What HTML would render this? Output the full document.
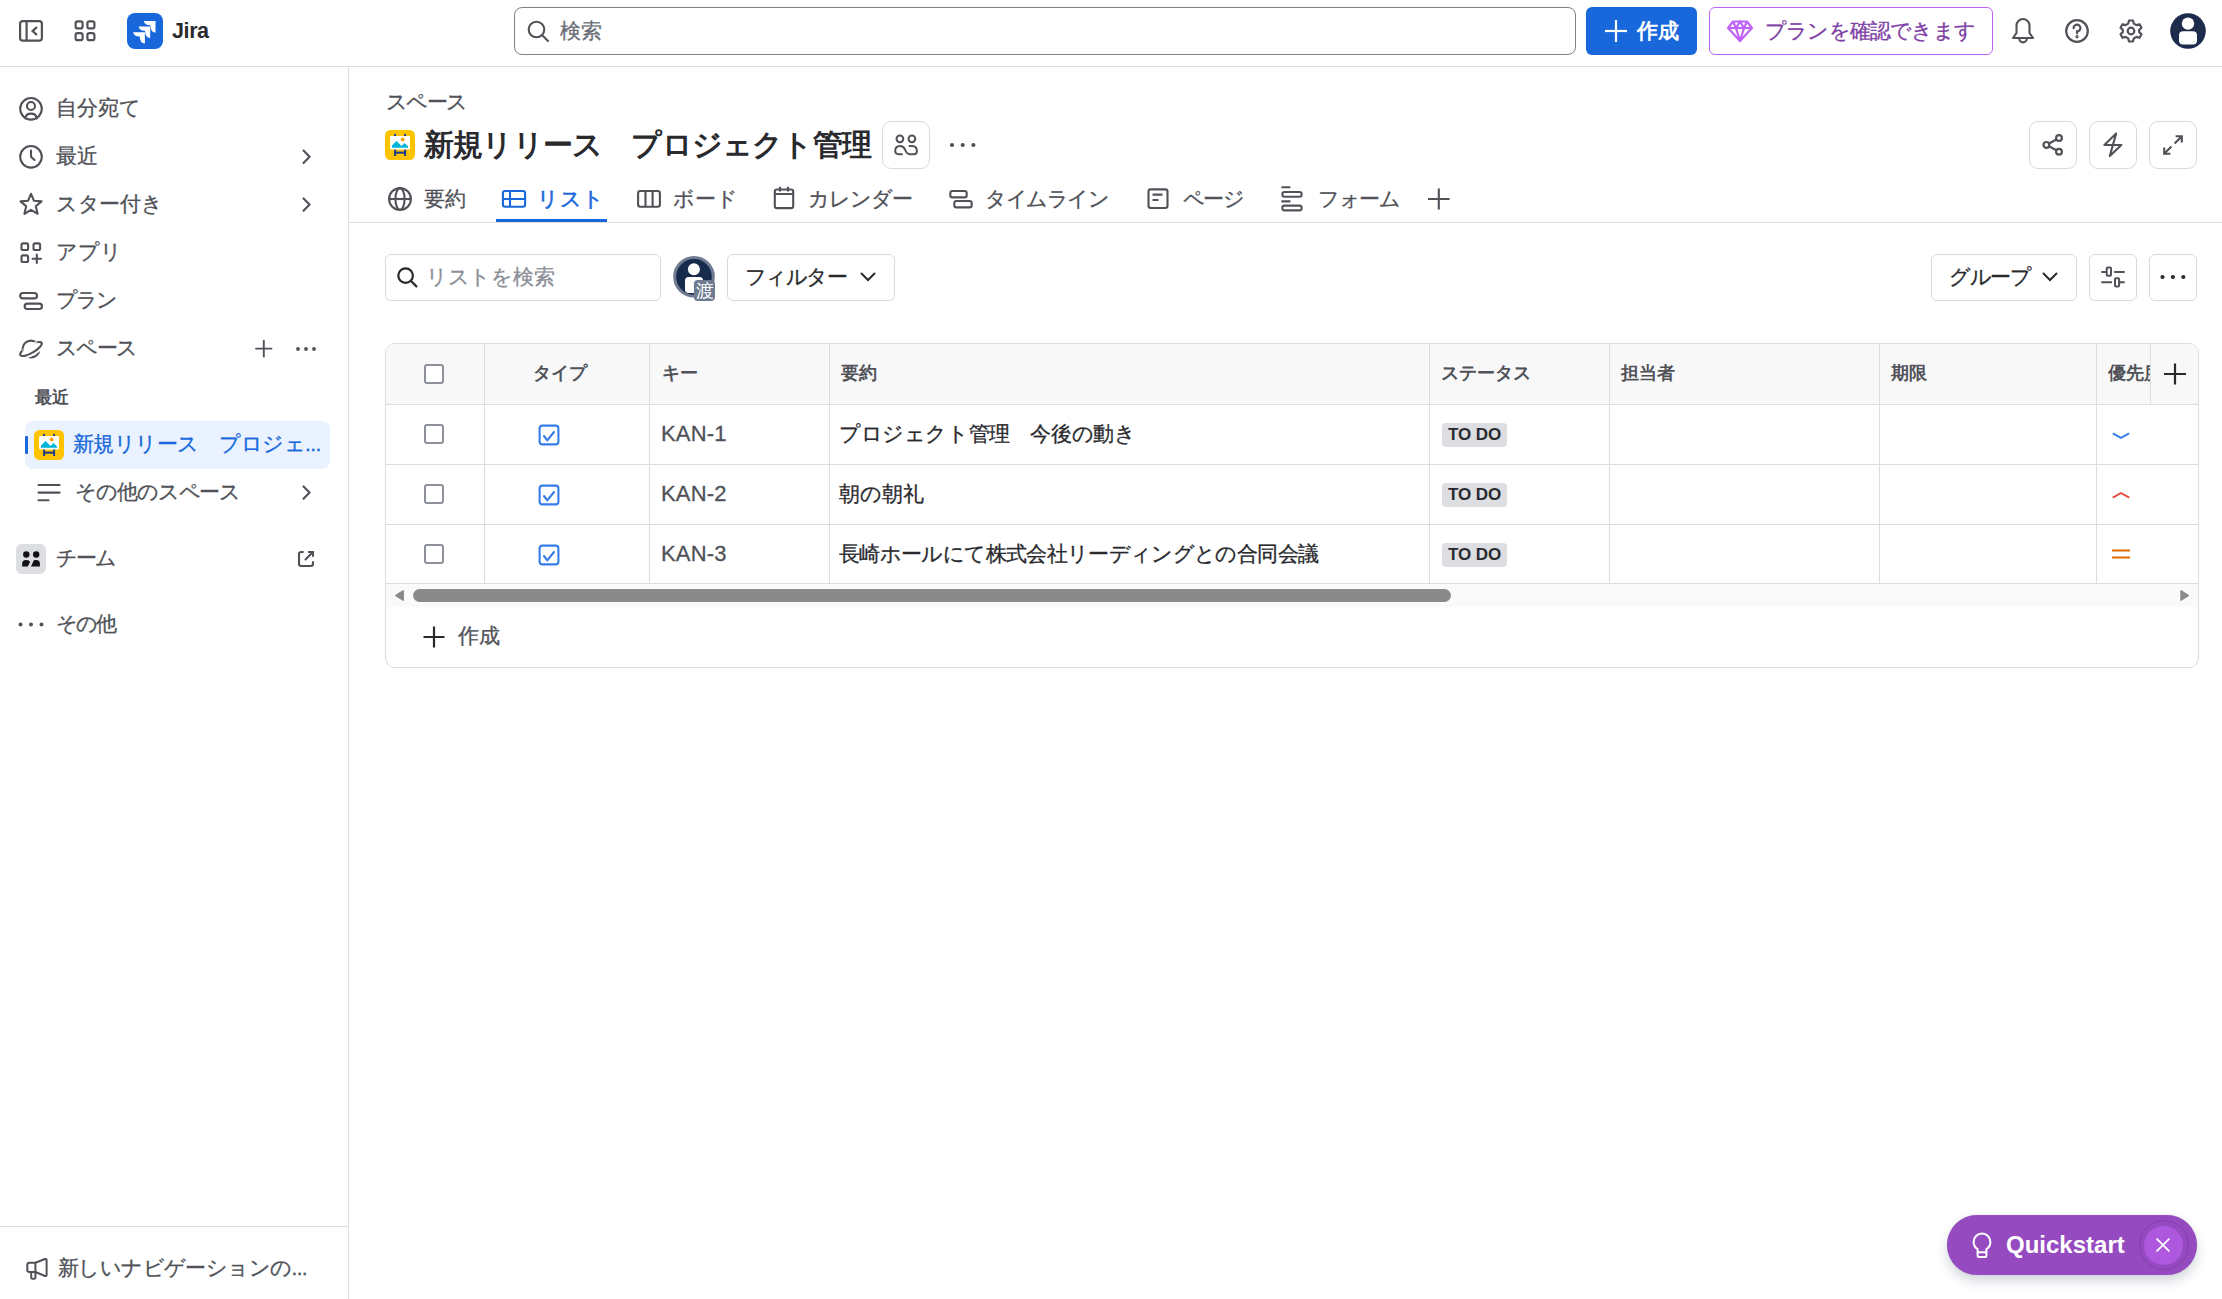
<!DOCTYPE html>
<html lang="ja">
<head>
<meta charset="utf-8">
<style>
*{box-sizing:border-box;margin:0;padding:0}
html,body{width:2222px;height:1299px;overflow:hidden;background:#fff}
body{font-family:"Liberation Sans",sans-serif;color:#292a2e;font-size:21px;position:relative;-webkit-text-stroke:0.3px currentColor}
.a{position:absolute}
svg{display:block}
.ic{position:absolute}
/* top bar */
#top{left:0;top:0;width:2222px;height:67px;border-bottom:1px solid #dcdddc}
#side{left:0;top:67px;width:349px;height:1232px;border-right:1px solid #dcdddc}
.nav{position:absolute;left:56px;color:#505258;font-size:21px;line-height:24px;white-space:nowrap}
.btn{position:absolute;border:1px solid #d9dad9;border-radius:9px;background:#fff}
.th{position:absolute;top:361px;font-weight:bold;-webkit-text-stroke:0;color:#505258;font-size:18px;line-height:24px;white-space:nowrap}
.vl{position:absolute;width:1px;background:#dcdddc}
.hl{position:absolute;height:1px;background:#dcdddc}
.cb{position:absolute;width:20px;height:20px;border:2px solid #8c919b;border-radius:3px;background:#fff}
.td{position:absolute;font-size:21px;line-height:24px;white-space:nowrap;color:#292a2e}
.tab{position:absolute;top:187px;font-size:21px;line-height:24px;color:#505258;white-space:nowrap}
.loz{position:absolute;left:1442px;width:65px;height:24px;background:#dddee1;border-radius:4px;font-weight:bold;-webkit-text-stroke:0;font-size:17px;line-height:24px;text-align:center;color:#292a2e;letter-spacing:-0.1px}
</style>
</head>
<body>
<!-- TOP BAR -->
<div id="top" class="a"></div>
<!-- sidebar toggle -->
<svg class="ic" style="left:17px;top:18px" width="28" height="26" viewBox="0 0 28 26" fill="none" stroke="#505258" stroke-width="2.2">
<rect x="3.1" y="3.1" width="21.8" height="19.6" rx="2.6"/><line x1="9.6" y1="3" x2="9.6" y2="23"/><path d="M19.3 9.6 L15.6 13 L19.3 16.4" stroke-linecap="round"/></svg>
<!-- apps -->
<svg class="ic" style="left:72px;top:18px" width="26" height="26" viewBox="0 0 26 26" fill="none" stroke="#505258" stroke-width="2.2">
<rect x="3.6" y="3.4" width="7" height="7" rx="2"/><rect x="15.4" y="3.4" width="7" height="7" rx="2"/><rect x="3.6" y="15.2" width="7" height="7" rx="2"/><rect x="15.4" y="15.2" width="7" height="7" rx="2"/></svg>
<!-- jira logo -->
<svg class="ic" style="left:127px;top:13px" width="36" height="36" viewBox="0 0 36 36">
<rect width="36" height="36" rx="8" fill="#1868db"/>
<g fill="#fff">
<path d="M16.8 8.1 L28.5 8.1 L28.5 19.7 Q23.4 19.2 23.4 12.3 Q17.5 12.3 16.8 8.1 Z"/>
<path d="M11.6 13.5 L23.2 13.5 L23.2 25 Q18.1 24.6 18.1 17.7 Q12.2 17.7 11.6 13.5 Z"/>
<path d="M6.1 19.2 L17.9 19.2 L17.9 30.4 Q12.8 30 12.8 23.4 Q6.8 23.4 6.1 19.2 Z"/>
</g></svg>
<div class="a" style="left:172px;top:18px;font-size:21.5px;line-height:26px;font-weight:bold;-webkit-text-stroke:0;color:#292a2e;letter-spacing:-0.4px">Jira</div>
<!-- search -->
<div class="a" style="left:514px;top:7px;width:1062px;height:48px;border:1px solid #7d818a;border-radius:8px"></div>
<svg class="ic" style="left:525px;top:18px" width="26" height="26" viewBox="0 0 26 26" fill="none" stroke="#505258" stroke-width="2.1" stroke-linecap="round">
<circle cx="11.5" cy="11.5" r="7.8"/><line x1="17.3" y1="17.3" x2="23" y2="23"/></svg>
<div class="a" style="left:560px;top:19px;font-size:21px;line-height:24px;color:#6b6e76">検索</div>
<!-- create -->
<div class="a" style="left:1586px;top:7px;width:111px;height:48px;background:#1868db;border-radius:6px"></div>
<svg class="ic" style="left:1604px;top:19px" width="24" height="24" viewBox="0 0 24 24" stroke="#fff" stroke-width="2.2"><line x1="1" y1="12" x2="23" y2="12"/><line x1="12" y1="1" x2="12" y2="23"/></svg>
<div class="a" style="left:1637px;top:19px;font-size:21px;line-height:24px;font-weight:bold;-webkit-text-stroke:0;color:#fff">作成</div>
<!-- plan -->
<div class="a" style="left:1709px;top:7px;width:284px;height:48px;border:1.5px solid #bf63f3;border-radius:6px"></div>
<svg class="ic" style="left:1726px;top:19px" width="28" height="24" viewBox="0 0 28 24" fill="none" stroke="#bf63f3" stroke-width="2.2" stroke-linejoin="round">
<path d="M7 2.5 H21 L26 9 L14 22 L2 9 Z"/><path d="M2 9 H26"/><path d="M10 9 L14 22 L18 9"/><path d="M7 2.5 L10 9 L14 2.5 L18 9 L21 2.5"/></svg>
<div class="a" style="left:1765px;top:19px;font-size:21px;line-height:24px;color:#803fa5;letter-spacing:-0.8px">プランを確認できます</div>
<!-- bell -->
<svg class="ic" style="left:2009px;top:17px" width="28" height="28" viewBox="0 0 28 28" fill="none" stroke="#505258" stroke-width="2.1" stroke-linejoin="round">
<path d="M4 21 L7.5 16 V8.5 A6.5 6.5 0 0 1 20.5 8.5 V16 L24 21 Z"/><path d="M10.2 21.6 A3.8 3.8 0 0 0 17.8 21.6"/></svg>
<!-- help -->
<svg class="ic" style="left:2063px;top:17px" width="28" height="28" viewBox="0 0 28 28" fill="none" stroke="#505258" stroke-width="2.2">
<circle cx="14" cy="14" r="10.8"/><path d="M10.6 11.2 A3.4 3.4 0 1 1 14 14.4 V16.3" stroke-linecap="round"/><circle cx="14" cy="19.8" r="0.6" fill="#505258"/></svg>
<!-- settings -->
<svg class="ic" style="left:2117px;top:17px" width="28" height="28" viewBox="0 0 28 28" fill="none" stroke="#505258" stroke-width="2.2" stroke-linejoin="round">
<path d="M12 3.5 H16 L16.8 6.6 L19.4 8.1 L22.5 7.2 L24.5 10.7 L22.2 12.9 V15.1 L24.5 17.3 L22.5 20.8 L19.4 19.9 L16.8 21.4 L16 24.5 H12 L11.2 21.4 L8.6 19.9 L5.5 20.8 L3.5 17.3 L5.8 15.1 V12.9 L3.5 10.7 L5.5 7.2 L8.6 8.1 L11.2 6.6 Z"/><circle cx="14" cy="14" r="3.3"/></svg>
<!-- avatar -->
<svg class="ic" style="left:2169px;top:12px" width="38" height="38" viewBox="0 0 38 38">
<defs><clipPath id="cav"><circle cx="19" cy="19" r="17.8"/></clipPath></defs>
<circle cx="19" cy="19" r="17.8" fill="#1d2b4c"/>
<g clip-path="url(#cav)" fill="#fff"><circle cx="19" cy="11.6" r="6.2"/><rect x="10" y="19.2" width="18" height="13.4" rx="4"/></g></svg>


<!-- SIDEBAR -->
<div id="side" class="a"></div>
<!-- sidebar icons -->
<svg class="ic" style="left:0;top:67px" width="349" height="600" viewBox="0 67 349 600" fill="none" stroke="#505258" stroke-width="2.1" stroke-linecap="round" stroke-linejoin="round">
<!-- person -->
<circle cx="31" cy="108.8" r="10.8"/><circle cx="31" cy="106" r="4"/><path d="M25.3 118.4 Q25.6 113.6 31 113.6 Q36.4 113.6 36.7 118.4"/>
<!-- clock -->
<circle cx="31" cy="156.8" r="10.8"/><path d="M31 150.6 V156.8 L34.5 160"/>
<!-- star -->
<path d="M31 193.8 L34 200.8 L41.5 201.4 L35.8 206.3 L37.6 213.8 L31 209.8 L24.4 213.8 L26.2 206.3 L20.5 201.4 L28 200.8 Z"/>
<!-- apps -->
<rect x="21.5" y="243.4" width="6.6" height="6.6" rx="1.6"/><rect x="33.5" y="243.4" width="6.6" height="6.6" rx="1.6"/><rect x="21.5" y="255.4" width="6.6" height="6.6" rx="1.6"/><path d="M32.6 258.7 H41 M36.8 254.5 V262.9"/>
<!-- plan -->
<rect x="20.2" y="293" width="16.8" height="5.4" rx="2.7"/><rect x="24.6" y="303.6" width="17.4" height="5.4" rx="2.7"/>
<!-- planet -->

<!-- chevrons -->
<path d="M303.5 150.6 L309.6 156.8 L303.5 163"/><path d="M303.5 198.4 L309.6 204.6 L303.5 210.8"/><path d="M303.5 486.4 L309.6 492.6 L303.5 498.8"/>
<!-- plus / more next to space -->
<path d="M256 348.6 H271.5 M263.8 340.8 V356.4" stroke-width="1.9"/>
<!-- other spaces list icon -->
<path d="M38.5 485 H59.6 M38.5 492.6 H59.6 M38.5 500.2 H48.5"/>
<!-- external link -->
<path d="M303.7 552 H301.2 Q299 552 299 554.2 V563.8 Q299 566 301.2 566 H310.8 Q313 566 313 563.8 V561.2" stroke-linecap="butt"/><path d="M305 560.1 L312.4 552.6" stroke-linecap="butt"/><path d="M308 552 H313 V556.7" stroke-linecap="butt" stroke-linejoin="miter"/>
</svg>
<svg class="ic" style="left:0;top:320px" width="62" height="60" viewBox="0 320 62 60" fill="none" stroke="#505258" stroke-width="2.1">
<defs>
<clipPath id="uh"><rect x="-20" y="300" width="102" height="49" transform="rotate(-30 31 349)"/></clipPath>
<clipPath id="lh"><rect x="-20" y="349" width="102" height="49" transform="rotate(-30 31 349)"/></clipPath>
<mask id="ringm" maskUnits="userSpaceOnUse" x="0" y="320" width="62" height="60"><rect x="0" y="320" width="62" height="60" fill="#fff"/><circle cx="31" cy="349" r="8.2" fill="#000" clip-path="url(#uh)"/></mask>
<mask id="planm" maskUnits="userSpaceOnUse" x="0" y="320" width="62" height="60"><rect x="0" y="320" width="62" height="60" fill="#fff"/>
<g transform="rotate(-30 31 349)"><ellipse cx="31" cy="349" rx="12.5" ry="4" fill="#000"/><ellipse cx="31" cy="349" rx="12.5" ry="4" fill="none" stroke="#000" stroke-width="6" clip-path="url(#lh)"/></g></mask>
</defs>
<circle cx="31" cy="349" r="8.4" mask="url(#planm)"/>
<g mask="url(#ringm)"><ellipse cx="31" cy="349" rx="12.3" ry="3.9" transform="rotate(-30 31 349)"/></g>
</svg>
<svg class="ic" style="left:294px;top:344px" width="24" height="10" viewBox="0 0 24 10" fill="#505258"><circle cx="4" cy="5" r="1.9"/><circle cx="12" cy="5" r="1.9"/><circle cx="20" cy="5" r="1.9"/></svg>
<svg class="ic" style="left:17px;top:619px" width="28" height="10" viewBox="0 0 28 10" fill="#505258"><circle cx="3.5" cy="5.4" r="2"/><circle cx="14" cy="5.4" r="2"/><circle cx="24.5" cy="5.4" r="2"/></svg>
<div class="nav" style="top:96px">自分宛て</div>
<div class="nav" style="top:144px">最近</div>
<div class="nav" style="top:192px;letter-spacing:-0.35px">スター付き</div>
<div class="nav" style="top:240px">アプリ</div>
<div class="nav" style="top:288px;letter-spacing:-1.8px">プラン</div>
<div class="nav" style="top:336px;letter-spacing:-1.7px">スペース</div>
<div class="nav" style="left:35px;top:385px;font-size:17.4px;font-weight:bold;-webkit-text-stroke:0">最近</div>
<!-- selected project -->
<div class="a" style="left:25px;top:421px;width:305px;height:48px;background:#e9f2fe;border-radius:8px"></div>
<div class="a" style="left:25px;top:436px;width:3px;height:18px;background:#1868db;border-radius:1px"></div>
<svg class="ic pico" style="left:34px;top:430px" width="30" height="30" viewBox="0 0 30 30">
<rect width="30" height="30" rx="5.5" fill="#ffc400"/>
<g fill="#1f3b87"><rect x="9.1" y="3.9" width="2" height="3"/><rect x="19.1" y="3.9" width="2" height="3"/><rect x="9.1" y="19" width="2" height="7"/><rect x="19.1" y="19" width="2" height="7"/><rect x="10" y="21.6" width="10" height="2.1"/></g>
<rect x="5.1" y="6.1" width="19.9" height="13.5" rx="1" fill="#fff"/>
<path d="M7 15.4 L11.6 11.1 L16.5 15.9 L19.5 13 L23.1 16.6 V17.8 H7 Z" fill="#00b4d8"/>
<circle cx="17.7" cy="9.4" r="1.9" fill="#ff9e00"/>
</svg>
<div class="nav" style="left:73px;top:432px;color:#1868db;letter-spacing:-0.55px">新規リリース　プロジェ...</div>
<div class="nav" style="left:75px;top:480px;letter-spacing:-1.1px">その他のスペース</div>
<!-- team -->
<div class="a" style="left:16px;top:544px;width:30px;height:30px;background:#dddee1;border-radius:6px"></div>
<svg class="ic" style="left:16px;top:544px" width="30" height="30" viewBox="0 0 30 30" fill="#101214">
<circle cx="10.3" cy="10.5" r="3.2"/><circle cx="20.2" cy="10.5" r="3.2"/><path d="M6.2 22.6 V19.6 Q6.2 16 10 16 Q13.9 16 13.9 18.3 L11.7 22.6 Z"/><path d="M15 22.6 L17.5 16.9 Q17.9 16 19 16 H20.3 Q23.9 16 23.9 19.6 V22.6 Z"/></svg>
<div class="nav" style="top:546px;letter-spacing:-1.8px">チーム</div>
<div class="nav" style="top:612px;letter-spacing:-1.8px">その他</div>
<!-- bottom -->
<div class="a" style="left:0;top:1226px;width:348px;height:1px;background:#dcdddc"></div>
<svg class="ic" style="left:24px;top:1255px" width="26" height="28" viewBox="0 0 26 28" fill="none" stroke="#505258" stroke-width="2" stroke-linejoin="round" stroke-linecap="round">
<path d="M11.4 7.8 L21 4 Q22.6 3.5 22.6 5.2 V19.8 Q22.6 21.5 21 21 L11.4 17 H5.3 Q3.3 17 3.3 15 V9.8 Q3.3 7.8 5.3 7.8 Z"/><path d="M11.4 7.8 V22.6 Q11.4 23.8 10.2 23.8 H8.4 Q7.2 23.8 7.2 22.6 V17"/></svg>
<div class="nav" style="left:58px;top:1256px;letter-spacing:-0.6px">新しいナビゲーションの...</div>


<!-- MAIN -->
<div class="a" style="left:386px;top:90px;font-size:21px;line-height:24px;color:#505258;letter-spacing:-1.7px">スペース</div>
<svg class="ic" style="left:385px;top:130px" width="30" height="30" viewBox="0 0 30 30">
<rect width="30" height="30" rx="5.5" fill="#ffc400"/>
<g fill="#1f3b87"><rect x="9.1" y="3.9" width="2" height="3"/><rect x="19.1" y="3.9" width="2" height="3"/><rect x="9.1" y="19" width="2" height="7"/><rect x="19.1" y="19" width="2" height="7"/><rect x="10" y="21.6" width="10" height="2.1"/></g>
<rect x="5.1" y="6.1" width="19.9" height="13.5" rx="1" fill="#fff"/>
<path d="M7 15.4 L11.6 11.1 L16.5 15.9 L19.5 13 L23.1 16.6 V17.8 H7 Z" fill="#00b4d8"/>
<circle cx="17.7" cy="9.4" r="1.9" fill="#ff9e00"/>
</svg>
<div class="a" style="left:424px;top:127px;font-size:30px;line-height:36px;font-weight:bold;-webkit-text-stroke:0;color:#292a2e;white-space:nowrap;letter-spacing:-0.8px">新規リリース　プロジェクト管理</div>
<div class="btn" style="left:882px;top:121px;width:48px;height:48px"></div>
<svg class="ic" style="left:892px;top:131px" width="28" height="28" viewBox="0 0 28 28" fill="none" stroke="#505258" stroke-width="2" stroke-linejoin="round" stroke-linecap="butt">
<circle cx="7.9" cy="7.8" r="3.4"/><circle cx="19.9" cy="7.8" r="3.4"/><path d="M10.7 23.2 H6.5 Q3.2 23.2 3.2 20 Q3.2 15 8 15 Q11.5 15 13 18.5 Q14.8 23.2 17.8 23.2 H21.8 Q24.9 23.2 24.9 20 Q24.9 15 20 15 H16.8"/></svg>
<svg class="ic" style="left:948px;top:140px" width="30" height="10" viewBox="0 0 30 10" fill="#505258"><circle cx="4" cy="5" r="2.1"/><circle cx="14.7" cy="5" r="2.1"/><circle cx="25.4" cy="5" r="2.1"/></svg>
<!-- right header buttons -->
<div class="btn" style="left:2029px;top:121px;width:48px;height:48px"></div>
<div class="btn" style="left:2089px;top:121px;width:48px;height:48px"></div>
<div class="btn" style="left:2149px;top:121px;width:48px;height:48px"></div>
<svg class="ic" style="left:2039px;top:131px" width="28" height="28" viewBox="0 0 28 28" fill="none" stroke="#505258" stroke-width="2.2">
<circle cx="20" cy="7.1" r="2.9"/><circle cx="7.4" cy="13.9" r="2.9"/><circle cx="20" cy="20.7" r="2.9"/><path d="M10 12.5 L17.4 8.5 M10 15.3 L17.4 19.3"/></svg>
<svg class="ic" style="left:2099px;top:131px" width="28" height="28" viewBox="0 0 28 28" fill="none" stroke="#505258" stroke-width="2.1" stroke-linejoin="round"><path d="M17.1 2.6 L5.4 14 H22.4 L10.8 25 Z"/></svg>
<svg class="ic" style="left:2159px;top:131px" width="28" height="28" viewBox="0 0 28 28" fill="none" stroke="#505258" stroke-width="2.1">
<path d="M15.6 12.4 L22.6 5.4 M16.6 5.2 H22.8 V11.4 M12.4 15.6 L5.4 22.6 M5.2 16.6 V22.8 H11.4"/></svg>
<!-- tabs -->
<svg class="ic" style="left:380px;top:180px" width="1100" height="40" viewBox="380 180 1100 40" fill="none" stroke="#505258" stroke-width="2.1" stroke-linejoin="round">
<circle cx="400" cy="199" r="10.9"/><ellipse cx="400" cy="199" rx="4.6" ry="10.9"/><path d="M389.1 199 H410.9"/>
<g stroke="#1868db"><rect x="502.9" y="191" width="22.2" height="15.8" rx="2.2"/><path d="M503 199 H525 M510 191 V207"/></g>
<rect x="638.1" y="191" width="21.8" height="15.8" rx="2.2"/><path d="M645.5 191 V207 M652.6 191 V207"/>
<rect x="774.8" y="189.5" width="18.4" height="18.6" rx="2.2"/><path d="M775 194 H793 M780 186.8 V191.5 M788 186.8 V191.5"/>
<rect x="950.3" y="191" width="16.4" height="6.4" rx="2.2"/><rect x="954.3" y="201" width="17.4" height="6.4" rx="2.2"/>
<rect x="1148.5" y="189.4" width="19" height="18.6" rx="2.2"/><path d="M1152.5 194.6 H1162.5 M1152.5 200 H1158.5"/>
<path d="M1281.4 187.2 H1290.4 M1281.4 201.4 H1290.4"/><rect x="1282.4" y="192" width="19.2" height="4.8" rx="2"/><rect x="1282.4" y="205.6" width="19.2" height="4.8" rx="2"/>
<path d="M1428 199 H1449.6 M1438.8 188.4 V209.6"/>
</svg>
<div class="tab" style="left:424px">要約</div>
<div class="tab" style="left:537px;color:#1868db;letter-spacing:0.5px;-webkit-text-stroke:0.55px #1868db">リスト</div>
<div class="tab" style="left:673px">ボード</div>
<div class="tab" style="left:808px;letter-spacing:-0.95px">カレンダー</div>
<div class="tab" style="left:985px;letter-spacing:-1.4px">タイムライン</div>
<div class="tab" style="left:1183px;letter-spacing:-1.7px">ページ</div>
<div class="tab" style="left:1318px;letter-spacing:-1.3px">フォーム</div>
<div class="a" style="left:496px;top:219px;width:111px;height:3px;background:#1868db"></div>
<div class="a" style="left:349px;top:222px;width:1873px;height:1px;background:#dcdddc"></div>
<!-- toolbar -->
<div class="btn" style="left:385px;top:254px;width:276px;height:47px;border-radius:6px"></div>
<svg class="ic" style="left:394px;top:264px" width="26" height="26" viewBox="0 0 26 26" fill="none" stroke="#292a2e" stroke-width="2.2" stroke-linecap="round">
<circle cx="11.6" cy="11.6" r="7.3"/><line x1="17" y1="17" x2="22.4" y2="22.4"/></svg>
<div class="a" style="left:426px;top:265px;font-size:21px;line-height:24px;color:#8c8f97;letter-spacing:-0.3px">リストを検索</div>
<svg class="ic" style="left:672px;top:255px" width="46" height="48" viewBox="0 0 46 48">
<defs><clipPath id="cav2"><circle cx="22" cy="21.8" r="17.9"/></clipPath></defs>
<circle cx="22" cy="21.8" r="19.3" fill="#172b4d" stroke="#6e7b91" stroke-width="3"/>
<g clip-path="url(#cav2)" fill="#fff"><circle cx="21.9" cy="14.2" r="6"/><rect x="13" y="22" width="18" height="16" rx="3.5"/></g>
<rect x="21.9" y="25" width="21.1" height="20.9" rx="4" fill="#6e7b91"/>
<text x="32.6" y="42.2" font-size="17.5" fill="#fff" text-anchor="middle" font-family="Liberation Sans, sans-serif">渡</text>
</svg>
<div class="btn" style="left:727px;top:254px;width:168px;height:47px;border-radius:6px"></div>
<div class="a" style="left:745px;top:265px;font-size:21px;line-height:24px;color:#292a2e;letter-spacing:-1.6px">フィルター</div>
<svg class="ic" style="left:858px;top:270px" width="20" height="14" viewBox="0 0 20 14" fill="none" stroke="#292a2e" stroke-width="2" stroke-linecap="round"><path d="M3.5 3.5 L10 10 L16.5 3.5"/></svg>
<div class="btn" style="left:1931px;top:254px;width:146px;height:47px;border-radius:6px"></div>
<div class="a" style="left:1949px;top:265px;font-size:21px;line-height:24px;color:#292a2e;letter-spacing:-1.3px">グループ</div>
<svg class="ic" style="left:2040px;top:270px" width="20" height="14" viewBox="0 0 20 14" fill="none" stroke="#292a2e" stroke-width="2" stroke-linecap="round"><path d="M3.5 3.5 L10 10 L16.5 3.5"/></svg>
<div class="btn" style="left:2089px;top:254px;width:48px;height:47px;border-radius:6px"></div>
<svg class="ic" style="left:2099px;top:263px" width="28" height="28" viewBox="0 0 28 28" fill="none" stroke="#505258" stroke-width="2">
<path d="M2.3 8.9 H7 M15.2 8.9 H25.7 M2.3 19.3 H13 M20.8 19.3 H25.7"/><rect x="7.7" y="4.6" width="4.3" height="8.1" rx="1"/><rect x="16" y="15.3" width="4.1" height="8.1" rx="1"/></svg>
<div class="btn" style="left:2149px;top:254px;width:48px;height:47px;border-radius:6px"></div>
<svg class="ic" style="left:2159px;top:272px" width="28" height="10" viewBox="0 0 28 10" fill="#292a2e"><circle cx="3.5" cy="5" r="2.1"/><circle cx="13.9" cy="5" r="2.1"/><circle cx="24.3" cy="5" r="2.1"/></svg>


<!-- TABLE -->
<div class="a" style="left:385px;top:343px;width:1814px;height:325px;border:1px solid #dcdddc;border-radius:10px;overflow:hidden">
<div class="a" style="left:0;top:0;width:1814px;height:60px;background:#f8f8f8"></div>
<div class="a" style="left:0;top:240px;width:1814px;height:23px;background:#fafafa"></div>
</div>
<div class="hl" style="left:386px;top:404px;width:1812px"></div>
<div class="hl" style="left:386px;top:464px;width:1812px"></div>
<div class="hl" style="left:386px;top:524px;width:1812px"></div>
<div class="hl" style="left:386px;top:583px;width:1812px"></div>
<div class="vl" style="left:484px;top:344px;height:240px"></div>
<div class="vl" style="left:649px;top:344px;height:240px"></div>
<div class="vl" style="left:829px;top:344px;height:240px"></div>
<div class="vl" style="left:1429px;top:344px;height:240px"></div>
<div class="vl" style="left:1609px;top:344px;height:240px"></div>
<div class="vl" style="left:1879px;top:344px;height:240px"></div>
<div class="vl" style="left:2096px;top:344px;height:240px"></div>
<div class="vl" style="left:2150px;top:344px;height:61px"></div>
<div class="cb" style="left:424px;top:364px"></div>
<div class="th" style="left:533px">タイプ</div>
<div class="th" style="left:662px">キー</div>
<div class="th" style="left:841px">要約</div>
<div class="th" style="left:1441px">ステータス</div>
<div class="th" style="left:1621px">担当者</div>
<div class="th" style="left:1891px">期限</div>
<div class="a" style="left:2108px;top:361px;width:42px;overflow:hidden"><div class="th" style="position:static">優先度</div></div>
<svg class="ic" style="left:2163px;top:363px" width="24" height="22" viewBox="0 0 24 22" stroke="#292a2e" stroke-width="2.2"><path d="M1 11 H23 M12 0.5 V21.5"/></svg>
<div class="cb" style="left:424px;top:424px"></div>
<svg class="ic" style="left:538px;top:423px;margin-top:1px" width="22" height="22" viewBox="0 0 22 22" fill="none" stroke="#357de8" stroke-width="2.1" stroke-linejoin="round" stroke-linecap="round"><rect x="1.6" y="1.6" width="18.8" height="18.8" rx="2.6"/><path d="M6 12 L9.3 16.4 L16 8"/></svg>
<div class="td" style="left:661px;top:422px;color:#505258;font-size:22px;letter-spacing:0.2px">KAN-1</div>
<div class="td" style="left:839px;top:422px;letter-spacing:-0.4px">プロジェクト管理　今後の動き</div>
<div class="loz" style="top:423px">TO DO</div>
<svg class="ic" style="left:2110px;top:430.5px" width="22" height="12" viewBox="0 0 22 12" fill="none" stroke="#357de8" stroke-width="1.9"><path d="M2.8 2.3 L11 6.9 L19.2 2.3"/></svg>
<div class="cb" style="left:424px;top:484px"></div>
<svg class="ic" style="left:538px;top:483px;margin-top:1px" width="22" height="22" viewBox="0 0 22 22" fill="none" stroke="#357de8" stroke-width="2.1" stroke-linejoin="round" stroke-linecap="round"><rect x="1.6" y="1.6" width="18.8" height="18.8" rx="2.6"/><path d="M6 12 L9.3 16.4 L16 8"/></svg>
<div class="td" style="left:661px;top:482px;color:#505258;font-size:22px;letter-spacing:0.2px">KAN-2</div>
<div class="td" style="left:839px;top:482px">朝の朝礼</div>
<div class="loz" style="top:483px">TO DO</div>
<svg class="ic" style="left:2110px;top:488.5px" width="22" height="12" viewBox="0 0 22 12" fill="none" stroke="#e5493a" stroke-width="1.9"><path d="M2.8 8.6 L11 4 L19.2 8.6"/></svg>
<div class="cb" style="left:424px;top:544px"></div>
<svg class="ic" style="left:538px;top:543px;margin-top:1px" width="22" height="22" viewBox="0 0 22 22" fill="none" stroke="#357de8" stroke-width="2.1" stroke-linejoin="round" stroke-linecap="round"><rect x="1.6" y="1.6" width="18.8" height="18.8" rx="2.6"/><path d="M6 12 L9.3 16.4 L16 8"/></svg>
<div class="td" style="left:661px;top:542px;color:#505258;font-size:22px;letter-spacing:0.2px">KAN-3</div>
<div class="td" style="left:839px;top:542px;letter-spacing:-0.64px">長崎ホールにて株式会社リーディングとの合同会議</div>
<div class="loz" style="top:543px">TO DO</div>
<svg class="ic" style="left:2110px;top:548px" width="22" height="12" viewBox="0 0 22 12" stroke="#e06c00" stroke-width="2.2"><path d="M2 2.5 H20 M2 9.5 H20"/></svg>
<div class="a" style="left:413px;top:589px;width:1038px;height:13px;background:#8a8a8a;border-radius:7px"></div>
<svg class="ic" style="left:393px;top:588px" width="14" height="15" viewBox="0 0 14 15" fill="#8a8a8a" stroke="#8a8a8a" stroke-width="1.5" stroke-linejoin="round"><path d="M3 7.5 L10.2 2.8 V12.2 Z"/></svg>
<svg class="ic" style="left:2177px;top:588px" width="14" height="15" viewBox="0 0 14 15" fill="#8a8a8a" stroke="#8a8a8a" stroke-width="1.5" stroke-linejoin="round"><path d="M11.2 7.5 L4 2.8 V12.2 Z"/></svg>
<svg class="ic" style="left:422px;top:625px" width="24" height="24" viewBox="0 0 24 24" stroke="#292a2e" stroke-width="2.2"><path d="M1.5 12 H22.5 M12 1.5 V22.5"/></svg>
<div class="td" style="left:458px;top:624px;color:#505258">作成</div>
<div class="a" style="left:1947px;top:1215px;width:250px;height:60px;background:#964ac0;border-radius:30px;box-shadow:0 6px 12px rgba(9,30,66,0.18),0 0 1px rgba(9,30,66,0.3)"></div>
<svg class="ic" style="left:1970px;top:1232px" width="24" height="28" viewBox="0 0 24 28" fill="none" stroke="#fff" stroke-width="2" stroke-linejoin="round">
<path d="M7.6 20.2 V17.2 Q3.6 14.5 3.6 10 A8.4 8.4 0 0 1 20.4 10 Q20.4 14.5 16.4 17.2 V20.2 Z" /><path d="M7.6 20.2 V24 Q7.6 25 8.6 25 H15.4 Q16.4 25 16.4 24 V20.2"/></svg>
<div class="a" style="left:2006px;top:1230px;font-size:24px;line-height:30px;font-weight:bold;-webkit-text-stroke:0;color:#fff">Quickstart</div>
<div class="a" style="left:2139px;top:1220px;width:50px;height:50px;border-radius:25px;border:1px solid rgba(0,0,0,0.12)"></div>
<div class="a" style="left:2144px;top:1226px;width:39px;height:39px;border-radius:20px;background:#ae58e0"></div>
<svg class="ic" style="left:2151px;top:1233px" width="24" height="24" viewBox="0 0 24 24" stroke="#fff" stroke-width="1.8"><path d="M5.6 5.6 L18.4 18.4 M18.4 5.6 L5.6 18.4"/></svg>
</body>
</html>
